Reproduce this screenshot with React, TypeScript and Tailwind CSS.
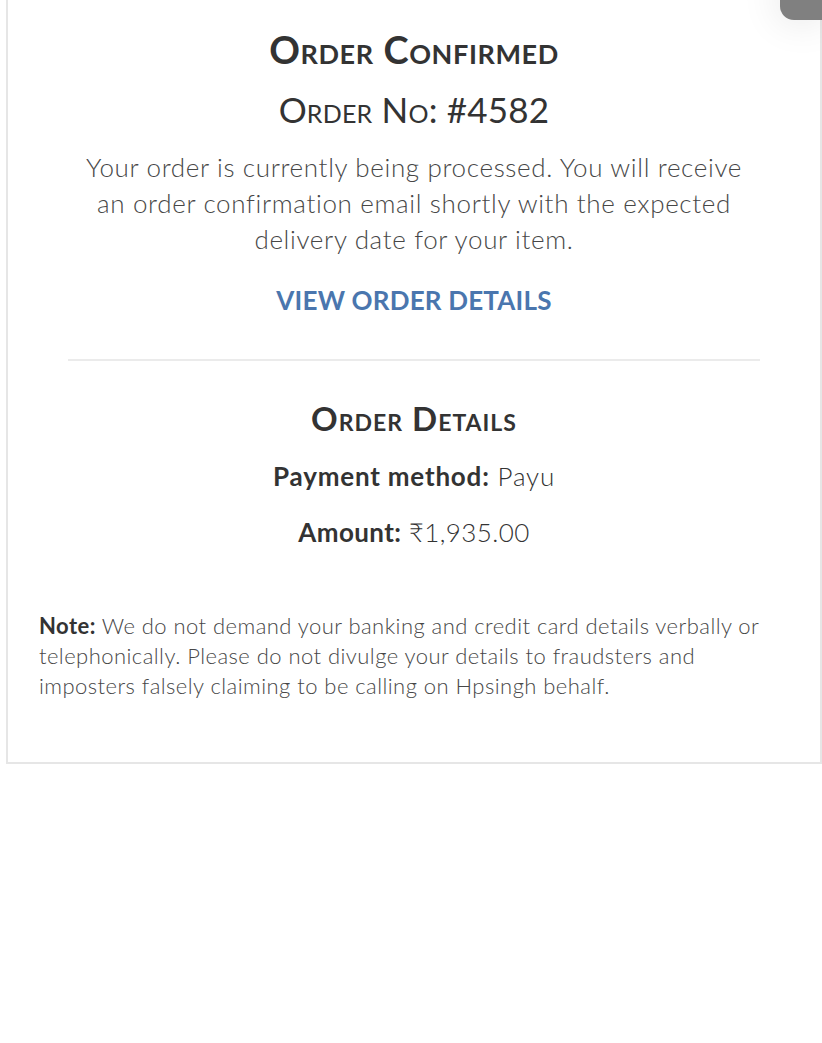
import React from 'react';

const OrderConfirmed: React.FC = () => {
  const order = {
    number: '#4582',
    payment: 'Payu',
    amount: '₹1,935.00',
  };

  return (
    <div className="relative min-h-screen bg-white font-['Lato','Open_Sans',sans-serif] text-[#333]">
      {/* onglet gris en haut à droite */}
      <div className="absolute right-0 top-[-20px] h-[40px] w-[42px] rounded-bl-[14px] bg-[#808080] shadow-[0_0_40px_rgba(0,0,0,0.12)]" />

      <div className="ml-[6px] w-[816px] border-x-2 border-b-2 border-[#e6e6e6] pb-[61px]">
        <div className="flex flex-col items-center pt-[27px] text-center">
          <h1 className="text-[38px] leading-[44px] font-bold tracking-[0.6px] [font-variant:small-caps]">
            Order Confirmed
          </h1>
          <h2 className="mt-[16px] text-[35px] leading-[44px] font-normal tracking-[0.2px] [font-variant:small-caps]">
            Order No: {order.number}
          </h2>
          <p className="mt-[18px] text-[26px] leading-[36px] font-light tracking-[0.65px] text-[#474747]">
            <span className="block">Your order is currently being processed. You will receive</span>
            <span className="block">an order confirmation email shortly with the expected</span>
            <span className="block">delivery date for your item.</span>
          </p>
          <a href="#" className="mt-[25px] text-[26px] leading-[36px] font-bold tracking-[0.2px] text-[#4a76ae]">
            VIEW ORDER DETAILS
          </a>
        </div>

        <div className="mx-[60px] mt-[41px] h-[2px] bg-[#ebebeb]" />

        <div className="flex flex-col items-center pt-[37px] text-center">
          <h3 className="text-[33px] leading-[40px] font-bold tracking-[1px] [font-variant:small-caps]">
            Order Details
          </h3>
          <p className="mt-[20px] text-[26px] leading-[36px] font-light tracking-[0.8px]">
            <span className="font-bold">Payment method:</span> {order.payment}
          </p>
          <p className="mt-[20px] text-[26px] leading-[36px] font-light tracking-[0.4px]">
            <span className="font-bold">Amount:</span> {order.amount}
          </p>
        </div>

        <p className="mt-[61px] px-[31px] text-[22px] leading-[30px] font-light tracking-[0.45px] text-[#474747]">
          <span className="font-bold text-[#333]">Note:</span> We do not demand your banking and credit card details verbally or telephonically. Please do not divulge your details to fraudsters and imposters falsely claiming to be calling on Hpsingh behalf.
        </p>
      </div>
    </div>
  );
};

export default OrderConfirmed;
